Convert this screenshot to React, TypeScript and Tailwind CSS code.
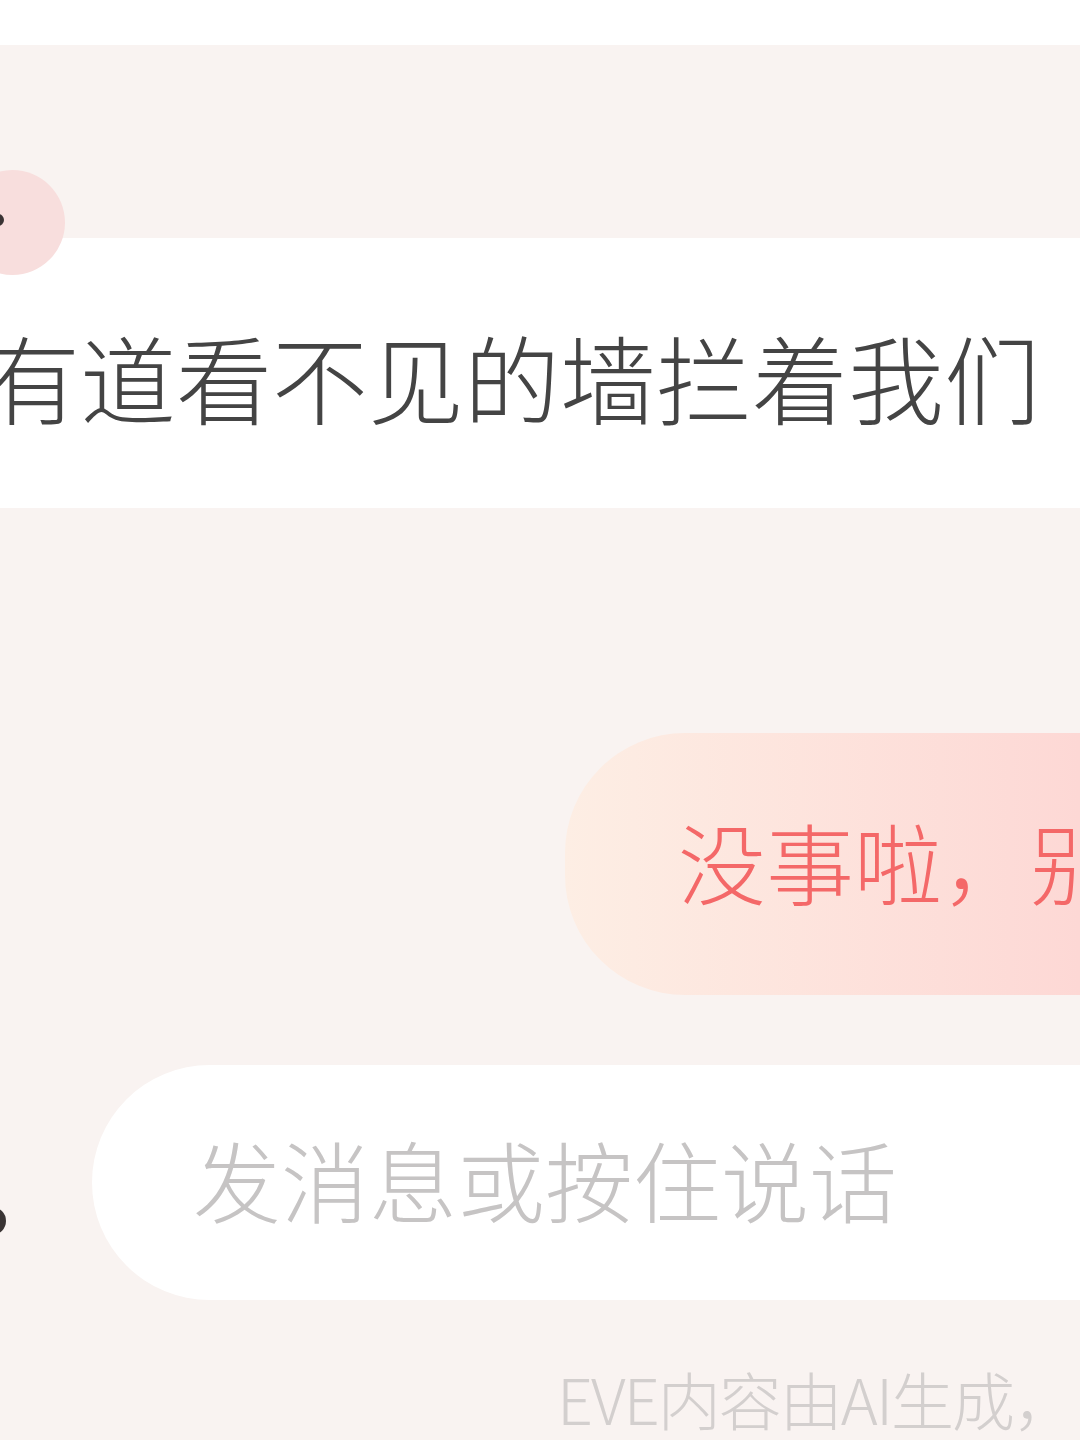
const cjk = { fontFamily: '"Noto Sans CJK SC", "Noto Sans", sans-serif' }

const App = () => {
    return <div style={cjk} className="relative w-[1080px] h-[1440px] overflow-hidden bg-[#f9f3f1]">
        <div className="h-[45px] bg-white" />

        <div className="relative h-[193px]">
            <div className="absolute left-[-40px] top-[125px] z-10 w-[105px] h-[105px] rounded-full bg-[#f8dedd]">
                <div className="absolute left-[32px] top-[44px] w-[12px] h-[12px] rounded-full bg-[#3a3434]" />
            </div>
        </div>

        <div className="h-[270px] bg-white flex items-center overflow-hidden">
            <p className="ml-[-16px] mt-[6px] whitespace-nowrap text-[96px] font-light leading-none text-[#444444]">有道看不见的墙拦着我们</p>
        </div>

        <div className="h-[225px]" />

        <div className="flex pl-[565px]">
            <div className="shrink-0 w-[515px] h-[262px] overflow-hidden rounded-l-[120px] bg-gradient-to-r from-[#fdeee4] to-[#fdd8d5] flex items-center pl-[113px]">
                <p className="mb-[8px] whitespace-nowrap text-[88px] font-light leading-none text-[#f46868]">没事啦，别</p>
            </div>
        </div>

        <div className="mt-[70px] flex items-center">
            <div className="shrink-0 w-[92px] h-[235px] relative">
                <div className="absolute left-[-22px] top-[142px] w-[28px] h-[28px] rounded-full bg-[#3a3434]" />
            </div>
            <div className="shrink-0 w-[988px] h-[235px] rounded-l-full bg-white flex items-center pl-[101px]">
                <p className="mb-[10px] whitespace-nowrap text-[88px] font-light leading-none text-[#c6c4c4]">发消息或按住说话</p>
            </div>
        </div>

        <div className="mt-[66px] pl-[557px]">
            <p className="whitespace-nowrap text-[63px] font-light leading-none tracking-[-2px] text-[#d3cfce]">EVE内容由AI生成，</p>
        </div>
    </div>
}

export default App
